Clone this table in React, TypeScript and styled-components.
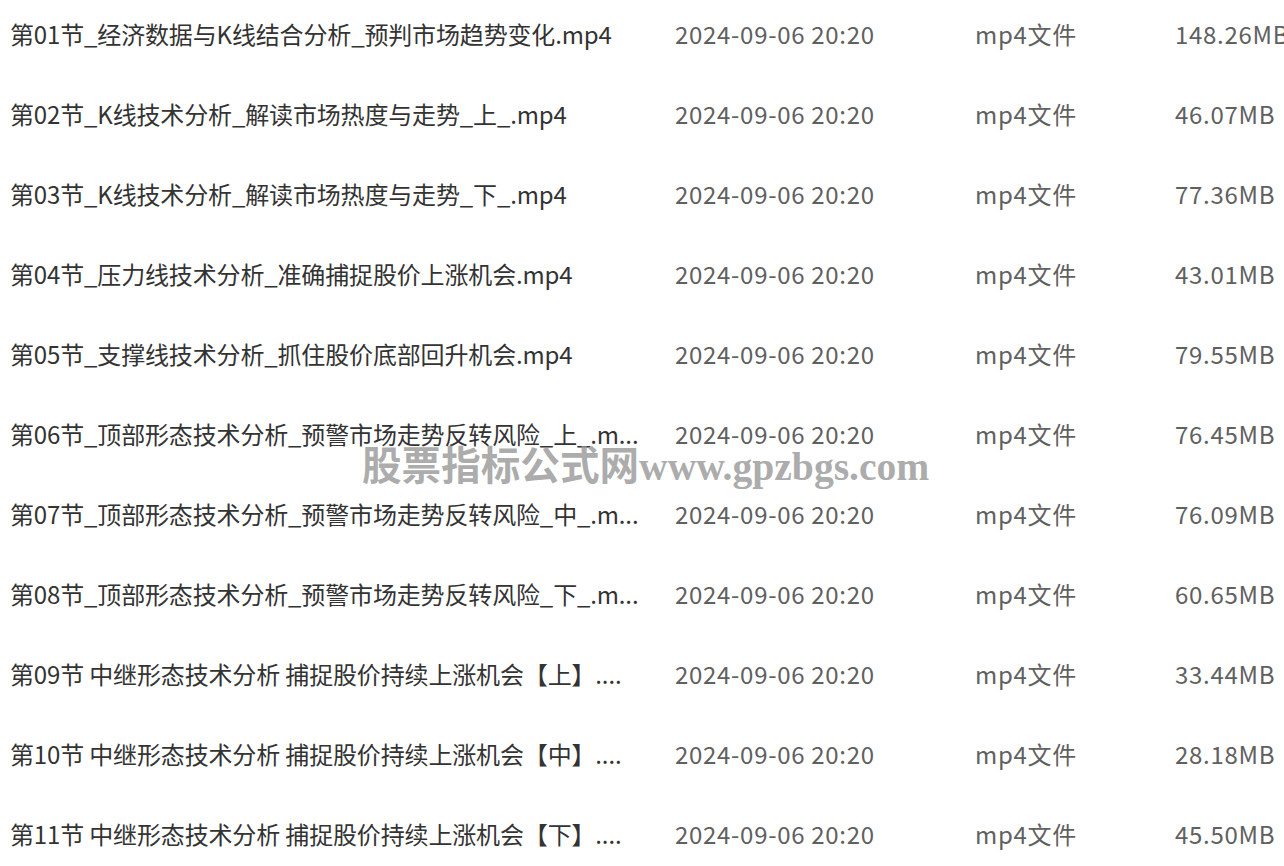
import React from "react";
import styled, { createGlobalStyle } from "styled-components";

const Global = createGlobalStyle`
  html, body { margin: 0; padding: 0; background: #fff; overflow: hidden; }
  body { font-family: "Noto Sans CJK SC", "Noto Sans", sans-serif; }
`;

const Page = styled.div`
  position: relative;
  width: 1284px;
  height: 866px;
  overflow: hidden;
`;

const List = styled.div`
  display: flex;
  flex-direction: column;
  margin-top: -7px;
`;

const Row = styled.div`
  display: grid;
  grid-template-columns: 665px 300px 200px 200px;
  align-items: center;
  height: 80px;
  padding-left: 10px;
  font-size: 24px;
  white-space: nowrap;
`;

const Name = styled.div`
  color: #333;
  width: 640px;
  overflow: hidden;
  letter-spacing: -0.15px;
`;

const Meta = styled.div`
  color: #606060;
  letter-spacing: 0.7px;
`;

const Watermark = styled.div`
  position: absolute;
  left: 362px;
  top: 434px;
  font-family: "Liberation Serif", "Noto Sans CJK SC", serif;
  font-weight: bold;
  font-size: 39.6px;
  color: rgba(150, 150, 150, 0.8);
  white-space: nowrap;
  pointer-events: none;
`;

const files: [string, string, string][] = [
  ["第01节_经济数据与K线结合分析_预判市场趋势变化.mp4", "第01节_经济数据与K线结合分析_预判市场趋势变化.mp4", "148.26MB"],
  ["第02节_K线技术分析_解读市场热度与走势_上_.mp4", "第02节_K线技术分析_解读市场热度与走势_上_.mp4", "46.07MB"],
  ["第03节_K线技术分析_解读市场热度与走势_下_.mp4", "第03节_K线技术分析_解读市场热度与走势_下_.mp4", "77.36MB"],
  ["第04节_压力线技术分析_准确捕捉股价上涨机会.mp4", "第04节_压力线技术分析_准确捕捉股价上涨机会.mp4", "43.01MB"],
  ["第05节_支撑线技术分析_抓住股价底部回升机会.mp4", "第05节_支撑线技术分析_抓住股价底部回升机会.mp4", "79.55MB"],
  ["第06节_顶部形态技术分析_预警市场走势反转风险_上_.mp4", "第06节_顶部形态技术分析_预警市场走势反转风险_上_.m...", "76.45MB"],
  ["第07节_顶部形态技术分析_预警市场走势反转风险_中_.mp4", "第07节_顶部形态技术分析_预警市场走势反转风险_中_.m...", "76.09MB"],
  ["第08节_顶部形态技术分析_预警市场走势反转风险_下_.mp4", "第08节_顶部形态技术分析_预警市场走势反转风险_下_.m...", "60.65MB"],
  ["第09节 中继形态技术分析 捕捉股价持续上涨机会【上】.mp4", "第09节 中继形态技术分析 捕捉股价持续上涨机会【上】....", "33.44MB"],
  ["第10节 中继形态技术分析 捕捉股价持续上涨机会【中】.mp4", "第10节 中继形态技术分析 捕捉股价持续上涨机会【中】....", "28.18MB"],
  ["第11节 中继形态技术分析 捕捉股价持续上涨机会【下】.mp4", "第11节 中继形态技术分析 捕捉股价持续上涨机会【下】....", "45.50MB"],
];

export default function App() {
  return (
    <Page>
      <Global />
      <List>
        {files.map(([full, shown, size]) => (
          <Row key={full}>
            <Name title={full}>{shown}</Name>
            <Meta>2024-09-06 20:20</Meta>
            <Meta>mp4文件</Meta>
            <Meta>{size}</Meta>
          </Row>
        ))}
      </List>
      <Watermark>股票指标公式网www.gpzbgs.com</Watermark>
    </Page>
  );
}
